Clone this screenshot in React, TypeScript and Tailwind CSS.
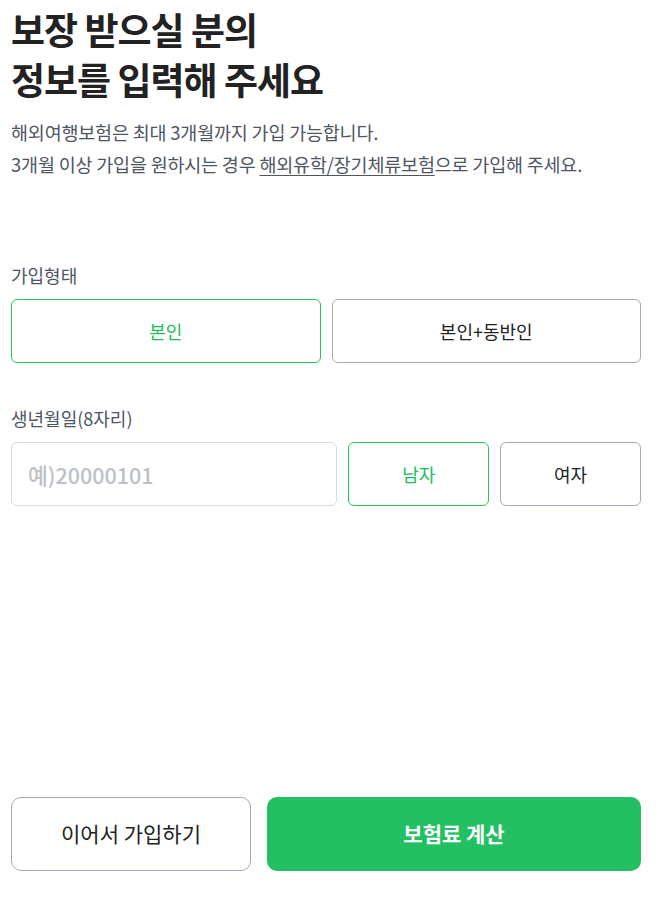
import { useState } from "react";

// 보험 가입 정보 입력 화면 — 가입형태 / 생년월일 / 성별 선택 + 하단 액션 버튼.

const FONT = "font-['Noto_Sans_CJK_KR','Noto_Sans',sans-serif]";

type JoinType = "self" | "companion";
type Gender = "male" | "female";

function ChoiceButton({
  active,
  label,
  onClick,
  className = "",
}: {
  active: boolean;
  label: string;
  onClick: () => void;
  className?: string;
}) {
  return (
    <button
      type="button"
      onClick={onClick}
      className={`h-[64px] rounded-[6px] border bg-white text-[18px] ${
        active
          ? "border-[#22c55e] text-[#22bb5c]"
          : "border-[#a3aab5] text-[#222]"
      } ${className}`}
    >
      {label}
    </button>
  );
}

export default function App() {
  const [joinType, setJoinType] = useState<JoinType>("self");
  const [gender, setGender] = useState<Gender>("male");
  const [birth, setBirth] = useState("");

  return (
    <div className={`${FONT} flex min-h-[916px] w-[664px] flex-col bg-white pl-[11px]`}>
      <div className="w-[630px]">
        {/* heading */}
        <h1 className="pt-[4px] text-[37px] font-bold leading-[50px] tracking-[-1px] text-[#222]">
          보장 받으실 분의
          <br />
          정보를 입력해 주세요
        </h1>

        <p className="mt-[12px] text-[18.5px] leading-[32px] tracking-[-0.2px] text-[#4e5563]">
          해외여행보험은 최대 3개월까지 가입 가능합니다.
          <br />
          3개월 이상 가입을 원하시는 경우{" "}
          <a href="#" className="underline underline-offset-[3px]">
            해외유학/장기체류보험
          </a>
          으로 가입해 주세요.
        </p>

        {/* 가입형태 */}
        <section className="mt-[83px]">
          <h2 className="text-[18px] leading-[24px] text-[#4e5563]">가입형태</h2>
          <div className="mt-[12px] grid grid-cols-2 gap-[11px]">
            <ChoiceButton
              active={joinType === "self"}
              label="본인"
              onClick={() => setJoinType("self")}
            />
            <ChoiceButton
              active={joinType === "companion"}
              label="본인+동반인"
              onClick={() => setJoinType("companion")}
            />
          </div>
        </section>

        {/* 생년월일 */}
        <section className="mt-[43px]">
          <h2 className="text-[18px] leading-[24px] text-[#4e5563]">생년월일(8자리)</h2>
          <div className="mt-[12px] flex items-center gap-[11px]">
            <input
              value={birth}
              onChange={(e) => setBirth(e.target.value)}
              placeholder="예)20000101"
              inputMode="numeric"
              className="h-[64px] w-[327px] rounded-[6px] border border-[#d6d9de] px-[16px] text-[21.5px] font-medium text-[#222] outline-none placeholder:text-[#bcc1c8]"
            />
            <ChoiceButton
              active={gender === "male"}
              label="남자"
              onClick={() => setGender("male")}
              className="w-[141px]"
            />
            <ChoiceButton
              active={gender === "female"}
              label="여자"
              onClick={() => setGender("female")}
              className="w-[141px]"
            />
          </div>
        </section>
      </div>

      {/* bottom actions */}
      <div className="mt-auto mb-[45px] flex w-[630px] gap-[16px]">
        <button
          type="button"
          className="h-[74px] w-[240px] rounded-[10px] border border-[#a3aab5] bg-white text-[21px] text-[#222]"
        >
          이어서 가입하기
        </button>
        <button
          type="button"
          className="h-[74px] flex-1 rounded-[10px] bg-[#22c062] text-[21px] font-bold text-white"
        >
          보험료 계산
        </button>
      </div>
    </div>
  );
}
